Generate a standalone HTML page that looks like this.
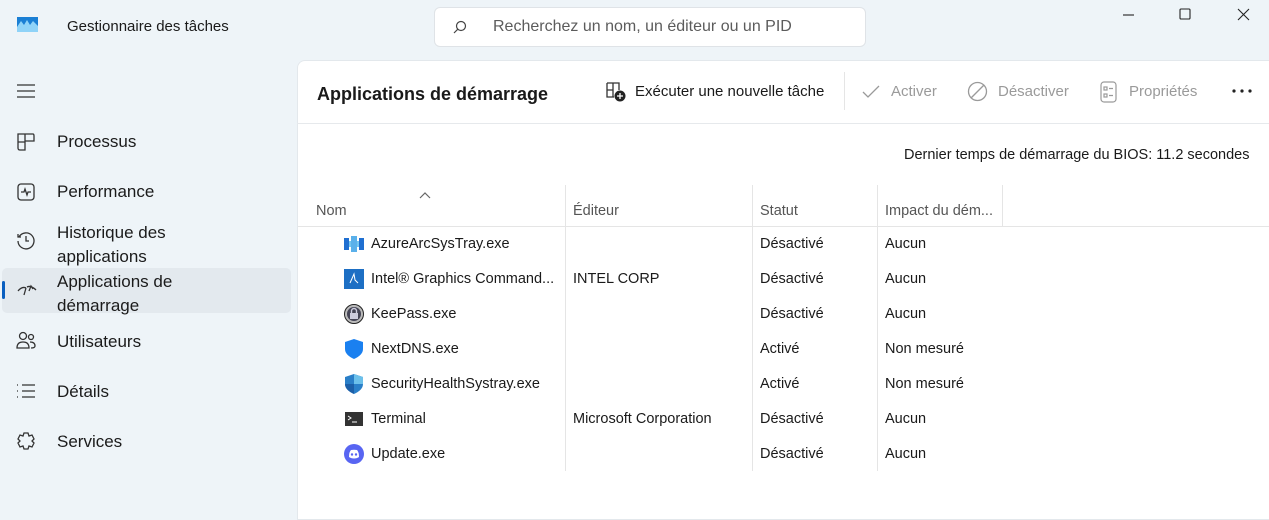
<!DOCTYPE html>
<html><head><meta charset="utf-8"><style>
*{margin:0;padding:0;box-sizing:border-box}
body{width:1269px;height:500px;background:#eef4f8;font-family:"Segoe UI","Liberation Sans",sans-serif;font-size:14px;color:#1a1a1a;position:relative;overflow:hidden}
.a{position:absolute;white-space:nowrap}
.nav{font-size:17px;color:#1b1b1b}
.panel{position:absolute;left:297px;top:60px;width:980px;height:460px;background:#fff;border-top-left-radius:8px;border:1px solid #e3e8ec;border-right:none}
.vl{position:absolute;width:1px;background:#e5e5e5;top:185px;height:286px}
.row{font-size:14.5px}
.gray{color:#9a9a9a}
</style></head><body>
<svg class="a" style="left:17px;top:17px" width="21" height="15" viewBox="0 0 21 15"><rect width="21" height="15" fill="#1a7fd4"/><path d="M0 10 L4 4 L7 8 L10 3 L13 8 L16 4 L21 9 V15 H0Z" fill="#8fd3f8"/></svg>
<div class="a" style="left:67px;top:18px;font-size:15px">Gestionnaire des tâches</div>
<div class="a" style="left:434px;top:7px;width:432px;height:40px;background:#fff;border:1px solid #dfe3e7;border-radius:6px"></div>
<svg class="a" style="left:453px;top:20px" width="14" height="14" viewBox="0 0 14 14" fill="none" stroke="#444" stroke-width="1.2"><circle cx="8" cy="6" r="4.5"/><path d="M4.8 9.2 L1 13"/></svg>
<div class="a" style="left:493px;top:18px;font-size:16px;color:#5c5c5c">Recherchez un nom, un éditeur ou un PID</div>
<svg class="a" style="left:1120px;top:6px" width="140" height="18" viewBox="0 0 140 18" fill="none" stroke="#222" stroke-width="1.1"><path d="M3 9 H14"/><rect x="60" y="3" width="10" height="10" rx="1"/><path d="M118 3 L129 14 M129 3 L118 14"/></svg>
<svg class="a" style="left:16px;top:84px" width="20" height="14" viewBox="0 0 20 14" stroke="#333" stroke-width="1.3"><path d="M1 1H19M1 7H19M1 13H19"/></svg>
<svg class="a" style="left:16px;top:132px" width="20" height="20" viewBox="0 0 20 20" fill="none" stroke="#333" stroke-width="1.3"><path d="M2 2H9V18H4Q2 18 2 16Z M9 2H17Q18 2 18 4V9H9 M2 10H9"/></svg>
<div class="a nav" style="left:57px;top:132px">Processus</div>
<svg class="a" style="left:16px;top:182px" width="20" height="20" viewBox="0 0 20 20" fill="none" stroke="#333" stroke-width="1.3"><rect x="2" y="2" width="16" height="16" rx="3"/><path d="M5 10H8L9 7L11 13L12 10H15"/></svg>
<div class="a nav" style="left:57px;top:182px">Performance</div>
<svg class="a" style="left:16px;top:231px" width="20" height="20" viewBox="0 0 20 20" fill="none" stroke="#333" stroke-width="1.3"><path d="M3 6A8 8 0 1 1 2 10 M2 3V6H5 M10 5V10H13"/></svg>
<div class="a nav" style="left:57px;top:221px;line-height:24px">Historique des<br>applications</div>
<div class="a" style="left:2px;top:268px;width:289px;height:45px;background:#e3e9ee;border-radius:5px"></div>
<div class="a" style="left:2px;top:281px;width:3px;height:18px;background:#0a5fc0;border-radius:2px"></div>
<svg class="a" style="left:16px;top:281px" width="22" height="18" viewBox="0 0 22 18" fill="none" stroke="#333" stroke-width="1.3"><path d="M2 10Q6 5 10 7 M10 7L8 14 M11 6Q15 4 20 9 M13 10L15 5L17 8"/></svg>
<div class="a nav" style="left:57px;top:270px;line-height:24px">Applications de<br>démarrage</div>
<svg class="a" style="left:16px;top:331px" width="20" height="20" viewBox="0 0 20 20" fill="none" stroke="#333" stroke-width="1.3"><circle cx="7" cy="5" r="3.5"/><circle cx="15" cy="6" r="2.5"/><path d="M1 17Q1 11 7 11Q13 11 13 17Z M14 11Q19 11 19 15Q19 17 15 17"/></svg>
<div class="a nav" style="left:57px;top:332px">Utilisateurs</div>
<svg class="a" style="left:16px;top:384px" width="20" height="14" viewBox="0 0 20 14" fill="none" stroke="#333" stroke-width="1.3"><path d="M6 1H19M6 7H19M6 13H19M1 1H2M1 7H2M1 13H2"/></svg>
<div class="a nav" style="left:57px;top:382px">Détails</div>
<svg class="a" style="left:16px;top:431px" width="20" height="20" viewBox="0 0 20 20" fill="none" stroke="#333" stroke-width="1.3"><path d="M8 2H12L13 5L16 4L18 8L16 10L18 12L16 16L13 15L12 18H8L7 15L4 16L2 12L4 10L2 8L4 4L7 5Z"/></svg>
<div class="a nav" style="left:57px;top:432px">Services</div>
<div class="panel"></div>
<div class="a" style="left:297px;top:123px;width:972px;height:1px;background:#e6e9ec"></div>
<div class="a" style="left:317px;top:84px;font-size:18px;font-weight:600">Applications de démarrage</div>
<svg class="a" style="left:605px;top:81px" width="22" height="22" viewBox="0 0 22 22" fill="none" stroke="#333" stroke-width="1.3"><path d="M2 2H14V9 M2 2V16H9 M8 2V16 M2 9H8"/><circle cx="15" cy="15" r="5.5" fill="#222" stroke="none"/><path d="M15 12V18M12 15H18" stroke="#fff"/></svg>
<div class="a" style="left:635px;top:83px;font-size:15px">Exécuter une nouvelle tâche</div>
<div class="a" style="left:844px;top:72px;width:1px;height:38px;background:#e5e5e5"></div>
<svg class="a" style="left:861px;top:84px" width="20" height="16" viewBox="0 0 20 16" fill="none" stroke="#9a9a9a" stroke-width="1.3"><path d="M2 8L7 13L18 2"/></svg>
<div class="a gray" style="left:891px;top:83px;font-size:15px">Activer</div>
<svg class="a" style="left:967px;top:81px" width="21" height="21" viewBox="0 0 21 21" fill="none" stroke="#9a9a9a" stroke-width="1.3"><circle cx="10.5" cy="10.5" r="9"/><path d="M4 17L17 4"/></svg>
<div class="a gray" style="left:998px;top:83px;font-size:15px">Désactiver</div>
<svg class="a" style="left:1100px;top:81px" width="17" height="22" viewBox="0 0 17 22" fill="none" stroke="#9a9a9a" stroke-width="1.2"><rect x="1" y="1" width="15" height="20" rx="3"/><rect x="4" y="6" width="3" height="3"/><rect x="4" y="13" width="3" height="3"/><path d="M9 7.5H13M9 14.5H13"/></svg>
<div class="a gray" style="left:1129px;top:83px;font-size:15px">Propriétés</div>
<svg class="a" style="left:1232px;top:89px" width="20" height="4" viewBox="0 0 20 4" fill="#222"><circle cx="2" cy="2" r="1.6"/><circle cx="10" cy="2" r="1.6"/><circle cx="18" cy="2" r="1.6"/></svg>
<div class="a" style="left:904px;top:147px;font-size:14.5px">Dernier temps de démarrage du BIOS: 11.2 secondes</div>
<svg class="a" style="left:419px;top:191px" width="12" height="8" viewBox="0 0 12 8" fill="none" stroke="#666" stroke-width="1.2"><path d="M1 7L6 2L11 7"/></svg>
<div class="a" style="left:316px;top:203px;font-size:14.5px;color:#555">Nom</div>
<div class="a" style="left:573px;top:203px;font-size:14.5px;color:#555">Éditeur</div>
<div class="a" style="left:760px;top:203px;font-size:14.5px;color:#555">Statut</div>
<div class="a" style="left:885px;top:203px;font-size:14.5px;color:#555">Impact du dém...</div>
<div class="a" style="left:298px;top:226px;width:971px;height:1px;background:#e5e5e5"></div>
<div class="vl" style="left:565px"></div><div class="vl" style="left:752px"></div><div class="vl" style="left:877px"></div><div class="vl" style="left:1002px;height:42px"></div>
<svg class="a" style="left:344px;top:236px" width="20" height="16" viewBox="0 0 20 16"><rect x="0" y="2" width="5" height="12" fill="#1f6fd1"/><rect x="15" y="2" width="5" height="12" fill="#1f6fd1"/><rect x="5" y="5" width="10" height="6" fill="#74c6f0"/><rect x="7" y="0" width="6" height="16" fill="#5ab0ea"/></svg>
<svg class="a" style="left:344px;top:269px" width="20" height="20" viewBox="0 0 20 20"><rect width="20" height="20" fill="#1d6fc4"/><path d="M6 14L10 5L11 11L14 14" stroke="#fff" fill="none"/></svg>
<svg class="a" style="left:344px;top:304px" width="20" height="20" viewBox="0 0 20 20"><circle cx="10" cy="10" r="9.5" fill="#bbb" stroke="#222"/><circle cx="10" cy="10" r="7" fill="#445"/><rect x="6" y="9" width="8" height="6" fill="#ccd"/><path d="M7.5 9V7A2.5 2.5 0 0 1 12.5 7V9" stroke="#ccd" fill="none" stroke-width="1.4"/></svg>
<svg class="a" style="left:345px;top:339px" width="18" height="20" viewBox="0 0 18 20"><path d="M9 0L18 3V10Q18 16 9 20Q0 16 0 10V3Z" fill="#1a80f0"/></svg>
<svg class="a" style="left:345px;top:374px" width="18" height="20" viewBox="0 0 18 20"><path d="M9 0L18 3V10Q18 16 9 20Q0 16 0 10V3Z" fill="#2a7fc8"/><path d="M9 0L18 3V10H9Z" fill="#6cc0ea"/><path d="M0 10H9V20Q0 16 0 10Z" fill="#1c5fa8"/></svg>
<svg class="a" style="left:345px;top:412px" width="18" height="14" viewBox="0 0 18 14"><rect width="18" height="14" fill="#333"/><path d="M3 4L6 6L3 8M7 10H12" stroke="#fff" fill="none"/></svg>
<svg class="a" style="left:344px;top:444px" width="20" height="20" viewBox="0 0 20 20"><circle cx="10" cy="10" r="10" fill="#5865f2"/><path d="M5 13Q5 8 7 6Q10 5.5 13 6Q15 8 15 13Q13 14.5 10 14.5Q7 14.5 5 13Z" fill="#fff"/><circle cx="8" cy="10.5" r="1.2" fill="#5865f2"/><circle cx="12" cy="10.5" r="1.2" fill="#5865f2"/></svg>
<div class="a row" style="left:371px;top:236px">AzureArcSysTray.exe</div>
<div class="a row" style="left:371px;top:271px">Intel® Graphics Command...</div>
<div class="a row" style="left:371px;top:306px">KeePass.exe</div>
<div class="a row" style="left:371px;top:341px">NextDNS.exe</div>
<div class="a row" style="left:371px;top:376px">SecurityHealthSystray.exe</div>
<div class="a row" style="left:371px;top:411px">Terminal</div>
<div class="a row" style="left:371px;top:446px">Update.exe</div>
<div class="a row" style="left:573px;top:271px">INTEL CORP</div>
<div class="a row" style="left:573px;top:411px">Microsoft Corporation</div>
<div class="a row" style="left:760px;top:236px">Désactivé</div>
<div class="a row" style="left:760px;top:271px">Désactivé</div>
<div class="a row" style="left:760px;top:306px">Désactivé</div>
<div class="a row" style="left:760px;top:341px">Activé</div>
<div class="a row" style="left:760px;top:376px">Activé</div>
<div class="a row" style="left:760px;top:411px">Désactivé</div>
<div class="a row" style="left:760px;top:446px">Désactivé</div>
<div class="a row" style="left:885px;top:236px">Aucun</div>
<div class="a row" style="left:885px;top:271px">Aucun</div>
<div class="a row" style="left:885px;top:306px">Aucun</div>
<div class="a row" style="left:885px;top:341px">Non mesuré</div>
<div class="a row" style="left:885px;top:376px">Non mesuré</div>
<div class="a row" style="left:885px;top:411px">Aucun</div>
<div class="a row" style="left:885px;top:446px">Aucun</div>
</body></html>
